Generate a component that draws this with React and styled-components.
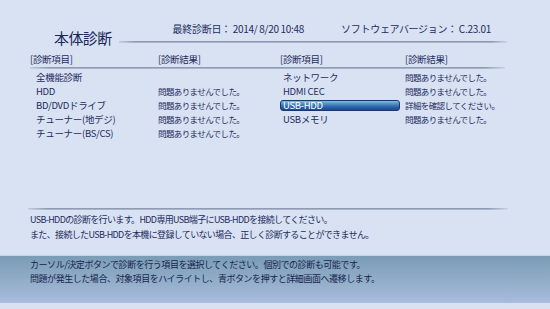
import React from "react";
import styled, { createGlobalStyle } from "styled-components";

const Global = createGlobalStyle`
  html, body { margin: 0; padding: 0; background: #d9e2f2; }
  body { font-family: "Noto Sans CJK JP", "Noto Sans", sans-serif; color: #1d2b5e; }
`;

const Page = styled.div`
  width: 550px;
  height: 309px;
  display: flex;
  flex-direction: column;
  background: #d9e2f2;
  overflow: hidden;
`;

const TopBar = styled.div`
  display: flex;
  align-items: flex-start;
  padding: 22px 43px 0 54px;
`;

const Title = styled.h1`
  margin: 7px 0 0 0;
  font-size: 15px;
  line-height: 18px;
  font-weight: 400;
  letter-spacing: -0.6px;
  color: #1a2858;
`;

const TopRight = styled.div`
  flex: 1;
  margin-left: 7px;
  display: flex;
  flex-direction: column;
`;

const Meta = styled.div`
  display: flex;
  gap: 37px;
  padding-left: 54px;
  height: 14px;
  font-size: 10px;
  line-height: 14px;
  letter-spacing: -0.3px;
  white-space: pre;
`;

const Rule = styled.div`
  height: 2px;
  margin-top: ${(p) => p.$mt || 0}px;
  background: linear-gradient(to bottom, #8e9bb3 0%, #8e9bb3 50%, #c3cde0 100%);
  -webkit-mask-image: linear-gradient(to right, rgba(0,0,0,0.3), #000 4%, #000 96%, rgba(0,0,0,0.2));
  mask-image: linear-gradient(to right, rgba(0,0,0,0.3), #000 4%, #000 96%, rgba(0,0,0,0.2));
`;

const Table = styled.div`
  padding: 0 45px 0 30px;
`;

const HeadRow = styled.div`
  display: grid;
  grid-template-columns: 128px 122px 125px 1fr;
  margin-top: 6px;
  height: 13px;
  font-size: 9.5px;
  line-height: 13px;
  letter-spacing: -0.3px;
`;

const Body = styled.div`
  display: grid;
  grid-template-columns: 250px 1fr;
  margin-top: 1px;
`;

const List = styled.div`
  display: flex;
  flex-direction: column;
`;

const Row = styled.div`
  display: grid;
  grid-template-columns: ${(p) => p.$first}px 1fr;
  height: 14px;
  align-items: center;
`;

const Item = styled.span`
  box-sizing: border-box;
  width: ${(p) => (p.$w ? `${p.$w}px` : "auto")};
  height: 11px;
  display: flex;
  align-items: center;
  padding-left: ${(p) => p.$pad}px;
  font-size: 9.5px;
  letter-spacing: -0.3px;
  white-space: nowrap;
  border-radius: 3px;
  border: 1px solid ${(p) => (p.$sel ? "#1b356f" : "transparent")};
  color: ${(p) => (p.$sel ? "#ffffff" : "inherit")};
  background: ${(p) =>
    p.$sel
      ? "linear-gradient(to bottom, #7cc0d6 0%, #4a8cc2 35%, #2a5ea6 70%, #1f4a90 100%)"
      : "transparent"};
`;

const Result = styled.span`
  font-size: 8.5px;
  letter-spacing: -0.6px;
  white-space: nowrap;
`;

const Spacer = styled.div`
  flex: 1;
`;

const Desc = styled.div`
  padding: 0 42px 0 28px;
  margin-bottom: 13px;
`;

const DescText = styled.div`
  padding: 2px 0 0 2px;
  font-size: 9px;
  letter-spacing: -0.65px;
  white-space: nowrap;
`;

const Line = styled.div`
  height: ${(p) => p.$h}px;
  line-height: ${(p) => p.$h}px;
`;

const Footer = styled.div`
  height: 48px;
  box-sizing: border-box;
  border-top: 1px solid #c4d3e3;
  background: linear-gradient(to bottom, #7b9cb6 0%, #8eabc6 45%, #a9bcdb 100%);
  padding: 2px 0 0 30px;
  font-size: 9px;
  letter-spacing: -0.45px;
  color: #17244f;
  white-space: nowrap;
`;

const BottomStrip = styled.div`
  height: 6px;
  background: #dae2f1;
`;

const OK = "問題ありませんでした。";

const left = [
  ["全機能診断", ""],
  ["HDD", OK],
  ["BD/DVDドライブ", OK],
  ["チューナー(地デジ)", OK],
  ["チューナー(BS/CS)", OK],
];

const right = [
  ["ネットワーク", OK],
  ["HDMI CEC", OK],
  ["USB-HDD", "詳細を確認してください。", true],
  ["USBメモリ", OK],
];

export default function App() {
  return (
    <Page>
      <Global />
      <TopBar>
        <Title>本体診断</Title>
        <TopRight>
          <Meta>
            <span>最終診断日： 2014/ 8/20 10:48</span>
            <span>ソフトウェアバージョン： C.23.01</span>
          </Meta>
          <Rule $mt={5} />
        </TopRight>
      </TopBar>
      <Table>
        <HeadRow>
          <span>[診断項目]</span>
          <span>[診断結果]</span>
          <span>[診断項目]</span>
          <span>[診断結果]</span>
        </HeadRow>
        <Rule $mt={1} />
        <Body>
          <List>
            {left.map(([a, b]) => (
              <Row key={a} $first={128}>
                <Item $pad={5}>{a}</Item>
                <Result>{b}</Result>
              </Row>
            ))}
          </List>
          <List>
            {right.map(([a, b, sel]) => (
              <Row key={a} $first={125}>
                <Item $pad={2} $w={120} $sel={sel}>{a}</Item>
                <Result>{b}</Result>
              </Row>
            ))}
          </List>
        </Body>
      </Table>
      <Spacer />
      <Desc>
        <Rule />
        <DescText>
          <Line $h={15}>USB-HDDの診断を行います。HDD専用USB端子にUSB-HDDを接続してください。</Line>
          <Line $h={15}>また、接続したUSB-HDDを本機に登録していない場合、正しく診断することができません。</Line>
        </DescText>
      </Desc>
      <Footer>
        <Line $h={14}>カーソル/決定ボタンで診断を行う項目を選択してください。個別での診断も可能です。</Line>
        <Line $h={14}>問題が発生した場合、対象項目をハイライトし、青ボタンを押すと詳細画面へ遷移します。</Line>
      </Footer>
      <BottomStrip />
    </Page>
  );
}
